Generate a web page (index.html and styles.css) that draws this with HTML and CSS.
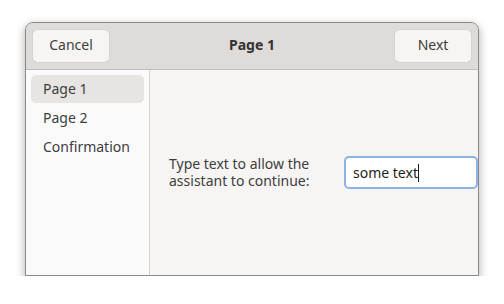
FILE: index.html
```html
<!DOCTYPE html>
<html>
<head>
<meta charset="utf-8">
<link rel="stylesheet" href="styles.css">
</head>
<body>
<div class="window">
  <header class="headerbar">
    <button class="btn">Cancel</button>
    <div class="title">Page 1</div>
    <button class="btn">Next</button>
  </header>
  <div class="body">
    <nav class="sidebar">
      <div class="row selected">Page 1</div>
      <div class="row">Page 2</div>
      <div class="row">Confirmation</div>
    </nav>
    <main class="content">
      <label class="prompt">Type text to allow the assistant to continue:</label>
      <div class="entry"><span>some text</span><span class="caret"></span></div>
    </main>
  </div>
</div>
</body>
</html>
```
FILE: styles.css
```css
html, body {
  margin: 0;
  padding: 0;
  background: #ffffff;
}
body {
  font-family: "Noto Sans", "Open Sans", sans-serif;
  font-size: 14px;
  color: #3d3d3d;
}
.window {
  margin: 22px 0 0 25px;
  width: 454px;
  height: 254px;
  box-sizing: border-box;
  border: 1px solid #8c8a88;
  border-radius: 8px 8px 0 0;
  background: #f6f5f4;
  box-shadow: 0 3px 9px 1px rgba(0, 0, 0, 0.28);
  display: flex;
  flex-direction: column;
  overflow: hidden;
}
.headerbar {
  height: 47px;
  box-sizing: border-box;
  flex: none;
  display: flex;
  align-items: center;
  justify-content: space-between;
  padding: 0 7px 1px 7px;
  background: #dedbd8;
  border-bottom: 1px solid #c0bdba;
}
.btn {
  width: 76px;
  height: 32px;
  border: none;
  border-radius: 5px;
  background: #f6f5f4;
  box-shadow: 0 0 0 1px rgba(0, 0, 0, 0.04);
  font-family: inherit;
  font-size: 14px;
  color: #3d3d3d;
  padding: 0 0 2px 0;
}
.title {
  font-weight: bold;
  color: #333333;
  padding-bottom: 2px;
}
.body {
  flex: 1;
  display: flex;
  min-height: 0;
}
.sidebar {
  width: 113px;
  flex: none;
  background: #fafafa;
  border-right: 1px solid #d3d0cd;
  padding: 5px 5px;
  display: flex;
  flex-direction: column;
  gap: 1px;
}
.row {
  height: 28px;
  line-height: 27px;
  padding-left: 12px;
  border-radius: 5px;
}
.row.selected {
  background: #e7e5e2;
}
.content {
  flex: 1;
  display: flex;
  align-items: center;
  padding: 0 0 0 19px;
}
.prompt {
  width: 160px;
  line-height: 17px;
  padding-bottom: 1px;
}
.entry {
  margin-left: auto;
  width: 134px;
  height: 33px;
  box-sizing: border-box;
  border: 2px solid #8db2e3;
  border-radius: 5px;
  background: #ffffff;
  display: flex;
  align-items: center;
  padding-left: 7px;
  color: #1e1e1e;
}
.caret {
  display: inline-block;
  width: 1px;
  height: 18px;
  background: #1e1e1e;
}
```
